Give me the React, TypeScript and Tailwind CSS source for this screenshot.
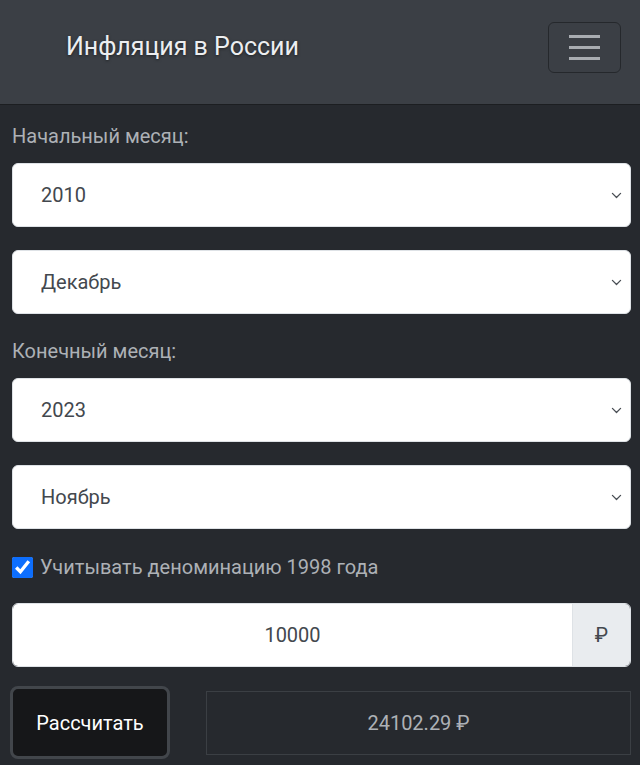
import { useState } from 'react'

const years = ['2010', '2023']

function Select({ value }: { value: string }) {
  return (
    <div className="relative">
      <select
        className="h-16 w-full appearance-none rounded-md border border-[#dee2e6] bg-white pl-7 pr-10 text-[20px] text-[#43484e] outline-none"
        defaultValue={value}
      >
        <option>{value}</option>
      </select>
      <svg
        className="pointer-events-none absolute right-[8px] top-1/2 h-[13px] w-[13px] -translate-y-1/2"
        viewBox="0 0 16 16"
        fill="none"
        stroke="#4a4f55"
        strokeWidth="1.6"
        strokeLinecap="round"
        strokeLinejoin="round"
      >
        <path d="M3 6l5 5 5-5" />
      </svg>
    </div>
  )
}

export default function App() {
  const [checked, setChecked] = useState(true)

  return (
    <div className="min-h-[765px] bg-[#26292e] font-['Roboto',sans-serif]">
      <header className="flex h-[105px] items-center justify-between border-b border-[#1c1e21] bg-[#3b3f45] pb-[10px] pl-[66px] pr-[19px]">
        <span className="text-[25px] text-[#eceef0] [text-shadow:0_1px_3px_rgba(0,0,0,0.5)]">
          Инфляция в России
        </span>
        <button className="flex h-[51px] w-[73px] flex-col items-center justify-center gap-[8px] rounded-md border border-[#25282c]">
          <span className="h-[3px] w-[31px] bg-[#a9adb2]" />
          <span className="h-[3px] w-[31px] bg-[#a9adb2]" />
          <span className="h-[3px] w-[31px] bg-[#a9adb2]" />
        </button>
      </header>

      <main className="pl-3 pr-[9px] pt-[17px]">
        <div className="text-[20px] leading-[28px] text-[#adb1b6]">Начальный месяц:</div>
        <div className="mt-[13px] flex flex-col gap-[23px]">
          <Select value={years[0]} />
          <Select value="Декабрь" />
        </div>

        <div className="mt-[23px] text-[20px] leading-[28px] text-[#adb1b6]">Конечный месяц:</div>
        <div className="mt-[13px] flex flex-col gap-[23px]">
          <Select value={years[1]} />
          <Select value="Ноябрь" />
        </div>

        <label className="mt-[24px] flex items-center gap-[7px] text-[20px] leading-[28px] text-[#adb1b6]">
          <input
            type="checkbox"
            checked={checked}
            onChange={(event) => setChecked(event.target.checked)}
            className="h-[21px] w-[21px] accent-[#0d6efd]"
          />
          Учитывать деноминацию 1998 года
        </label>

        <div className="mt-[22px] flex h-16 overflow-hidden rounded-md border border-[#dee2e6]">
          <input
            className="min-w-0 flex-1 bg-white text-center text-[20px] text-[#43484e] outline-none"
            defaultValue="10000"
          />
          <span className="flex w-[58px] items-center justify-center border-l border-[#dee2e6] bg-[#e9ecef] text-[20px] text-[#43484e]">
            ₽
          </span>
        </div>

        <div className="mt-[19px] flex items-center gap-[36px]">
          <button className="-ml-[2px] h-[73px] w-[160px] rounded-lg border-[3px] border-[#42464b] bg-[#161719] text-[20px] text-white">
            Рассчитать
          </button>
          <div className="flex h-16 flex-1 items-center justify-center border border-[#3b3f44] text-[20px] text-[#adb1b6]">
            24102.29 ₽
          </div>
        </div>
      </main>
    </div>
  )
}
